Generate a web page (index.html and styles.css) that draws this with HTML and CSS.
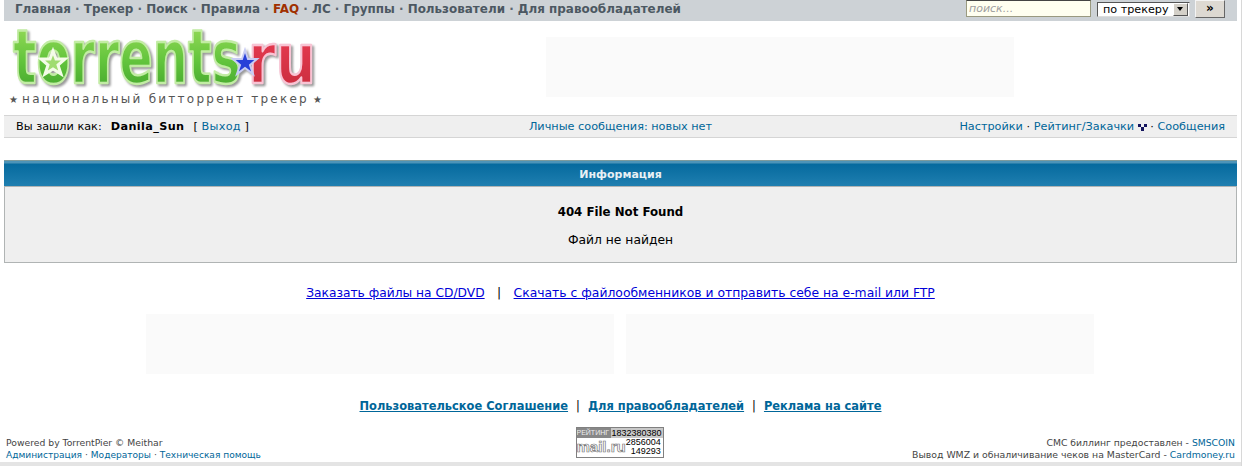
FILE: index.html
```html
<!DOCTYPE html>
<html lang="ru">
<head>
  <meta charset="UTF-8" />
  <title>Torrents.ru - Информация</title>
  <link rel="stylesheet" href="styles.css">
</head>
<body>
  <div class="page">

    <div class="topnav">
      <div class="mainmenu">
        <a href="#">Главная</a> · <a href="#">Трекер</a> · <a href="#">Поиск</a> · <a href="#">Правила</a> · <a href="#" class="faq">FAQ</a> · <a href="#">ЛС</a> · <a href="#">Группы</a> · <a href="#">Пользователи</a> · <a href="#">Для правообладателей</a>
      </div>
      <form class="search">
        <input type="text" class="search-input" placeholder="поиск..." />
        <div class="search-select">по трекеру<span class="select-btn"><i></i></span></div>
        <div class="search-go">»</div>
      </form>
    </div>

    <div class="logo-row">
      <div class="logo">
        <svg class="logo-img" width="320" height="68" viewBox="0 0 320 68">
          <defs>
            <linearGradient id="green" x1="0" y1="0" x2="0" y2="1">
              <stop offset="0" stop-color="#a4e060" />
              <stop offset="0.55" stop-color="#62c43c" />
              <stop offset="1" stop-color="#3c9e2a" />
            </linearGradient>
            <linearGradient id="red" x1="0" y1="0" x2="0" y2="1">
              <stop offset="0" stop-color="#f04058" />
              <stop offset="1" stop-color="#c42a3a" />
            </linearGradient>
          </defs>
          <text x="9" y="60" class="logo-green" textLength="228" lengthAdjust="spacingAndGlyphs">torrents</text>
          <text x="244" y="60" class="logo-red" textLength="68" lengthAdjust="spacingAndGlyphs">ru</text>
          <polygon points="49,28 52,36 61,36 54,42 57,51 49,46 41,51 44,42 37,36 46,36" fill="#a0dc70" stroke="#f4fce8" stroke-width="3" />
          <polygon points="241,27 244,36 253,36 246,42 249,51 241,45 233,51 236,42 229,36 238,36" fill="#2840d8" stroke="#c8ccf4" stroke-width="2" />
        </svg>
        <div class="slogan"><span class="star">★</span> национальный битторрент трекер <span class="star">★</span></div>
      </div>
      <div class="ad ad-top"></div>
    </div>

    <div class="userbar">
      <div class="userbar-left">Вы зашли как: &nbsp;<b>Danila_Sun</b> &nbsp;[ <a href="#">Выход</a> ]</div>
      <div class="userbar-mid"><a href="#">Личные сообщения: новых нет</a></div>
      <div class="userbar-right">
        <a href="#">Настройки</a> · <a href="#">Рейтинг/Закачки</a>
        <svg class="tick" width="9" height="7" viewBox="0 0 9 7"><path d="M0 0h3v3H0zM6 0h3v3H6zM3 3h3v4H3z" fill="#14145e" /></svg>
        · <a href="#">Сообщения</a>
      </div>
    </div>

    <div class="infobox">
      <div class="infobox-head">Информация</div>
      <div class="infobox-body">
        <h4>404 File Not Found</h4>
        <p>Файл не найден</p>
      </div>
    </div>

    <div class="promo">
      <a href="#">Заказать файлы на CD/DVD</a>
      <span class="promo-sep">|</span>
      <a href="#" class="promo-long">Скачать с файлообменников и отправить себе на e-mail или FTP</a>
    </div>

    <div class="ad-row">
      <div class="ad"></div>
      <div class="ad"></div>
    </div>

    <div class="bottomlinks">
      <a href="#">Пользовательское Соглашение</a>
      <span>|</span>
      <a href="#">Для правообладателей</a>
      <span>|</span>
      <a href="#">Реклама на сайте</a>
    </div>

    <div class="footer">
      <div class="footer-left">
        Powered by TorrentPier © Meithar<br />
        <a href="#">Администрация</a> · <a href="#">Модераторы</a> · <a href="#">Техническая помощь</a>
      </div>
      <div class="counter">
        <div class="counter-top"><span class="counter-name">РЕЙТИНГ</span><span class="counter-rate">1832380380</span></div>
        <div class="counter-bottom">
          <span class="counter-logo">mail.ru</span>
          <span class="counter-nums">2856004<br />149293</span>
        </div>
      </div>
      <div class="footer-right">
        СМС биллинг предоставлен - <a href="#">SMSCOIN</a><br />
        <span class="cash">Вывод WMZ и обналичивание чеков на MasterCard - <a href="#">Cardmoney.ru</a></span>
      </div>
    </div>

  </div>
  <div class="pagebottom"></div>
</body>
</html>
```

FILE: styles.css
```css
html, body {
  margin: 0;
  padding: 0;
  background-color: #fff;
}
body {
  color: #000;
  font-family: "DejaVu Sans", Verdana, sans-serif;
  font-size: 11px;
  border-right: 1px solid #d8d8d8;
  height: 466px;
  overflow: hidden;
  box-sizing: border-box;
  position: relative;
}
a {
  color: #006699;
  text-decoration: none;
}
.page {
  margin: 0 4px;
  width: 1233px;
}

.topnav {
  height: 21px;
  background-color: #cdd2d6;
  display: flex;
  justify-content: space-between;
  padding-left: 11px;
  box-sizing: border-box;
}
.mainmenu {
  font-size: 11.95px;
  font-weight: bold;
  line-height: 18px;
  color: #5c6670;
  white-space: nowrap;
}
.mainmenu a {
  color: #4c5862;
}
.mainmenu a.faq {
  color: #a03000;
}
.search {
  margin: 0;
  display: flex;
  align-items: flex-start;
  padding-right: 12px;
}
.search-input {
  width: 125px;
  height: 17px;
  box-sizing: border-box;
  margin: 0 6px 0 0;
  padding: 1px 2px;
  font-family: "DejaVu Sans", sans-serif;
  font-size: 11px;
  font-style: italic;
  background-color: #fffff0;
  border: 1px solid #9a9a80;
  border-top-color: #444;
}
.search-input::placeholder {
  color: #a0a0a0;
}
.search-select {
  width: 93px;
  height: 15px;
  margin-top: 2px;
  box-sizing: border-box;
  background-color: #fff;
  border: 1px solid #555;
  border-color: #555 #ddd #ddd #555;
  font-size: 11.2px;
  line-height: 14px;
  padding-left: 5px;
  position: relative;
  white-space: nowrap;
}
.select-btn {
  position: absolute;
  right: 1px;
  top: 0;
  width: 15px;
  height: 13px;
  background-color: #d4d0c8;
  border: 1px solid;
  border-color: #fff #555 #555 #fff;
  box-sizing: border-box;
}
.select-btn i {
  position: absolute;
  left: 3px;
  top: 3px;
  border: 3px solid transparent;
  border-top: 4px solid #000;
  border-bottom: 0;
}
.search-go {
  width: 30px;
  height: 18px;
  margin-left: 5px;
  box-sizing: border-box;
  background-color: #ddd9d2;
  border: 1px solid;
  border-color: #f4f4f4 #666 #666 #f4f4f4;
  font-size: 12px;
  font-weight: bold;
  line-height: 14px;
  text-align: center;
}

.logo-row {
  height: 94px;
  position: relative;
  display: flex;
}
.logo {
  width: 542px;
  flex: none;
}
.logo-img {
  display: block;
  margin-top: 2px;
  filter: drop-shadow(2px 2px 1px #999);
}
.logo-green {
  font: bold 74px "DejaVu Sans", sans-serif;
  fill: url(#green);
  stroke: #c2eca4;
  stroke-width: 2.5;
  stroke-linejoin: round;
}
.logo-red {
  font: bold 70px "DejaVu Sans", sans-serif;
  fill: url(#red);
  stroke: #f8c4d4;
  stroke-width: 2.5;
  stroke-linejoin: round;
}
.slogan {
  margin: 1px 0 0 7px;
  font-size: 12px;
  line-height: 14px;
  letter-spacing: 2.25px;
  color: #555;
  white-space: nowrap;
}
.star {
  font-size: 10px;
  letter-spacing: 0;
  margin: 0 -2px;
}
.ad {
  width: 468px;
  height: 60px;
  background-color: #fafafa;
}
.ad-top {
  margin-top: 16px;
}

.userbar {
  height: 23px;
  box-sizing: border-box;
  background-color: #efefef;
  border-top: 1px solid #d5d5d5;
  border-bottom: 1px solid #d5d5d5;
  display: grid;
  grid-template-columns: 1fr 1fr 1fr;
  align-items: center;
  padding: 0 12px;
  line-height: 22px;
  font-size: 11.25px;
  white-space: nowrap;
}
.userbar-left b {
  letter-spacing: 0.35px;
  margin: 0 2px 0 2px;
}
.userbar-left a {
  letter-spacing: 0.3px;
}
.userbar-mid {
  text-align: center;
}
.userbar-right {
  text-align: right;
}
.tick {
  vertical-align: -1px;
}

.infobox {
  margin-top: 22px;
  height: 103px;
  box-sizing: border-box;
  border: 1px solid #b0b4b4;
  border-top: 0;
  background-color: #efefef;
}
.infobox-head {
  height: 27px;
  margin: 0 -1px;
  box-sizing: border-box;
  border-top: 1px solid #7d9a9c;
  border-bottom: 1px solid #b0b4b4;
  background: linear-gradient(#4d94b8 0, #4d94b8 2px, #066a9e 3px, #1f7fb0 100%);
  color: #e8f0f4;
  font-size: 11px;
  font-weight: bold;
  line-height: 27px;
  text-align: center;
}
.infobox-body {
  text-align: center;
  font-size: 12.3px;
}
.infobox-body h4 {
  margin: 0;
  padding-top: 18px;
  font-size: 11.8px;
  line-height: 15px;
}
.infobox-body p {
  margin: 13px 0 0;
  line-height: 15px;
}

.promo {
  margin-top: 23px;
  text-align: center;
  font-size: 12.25px;
  line-height: 15px;
}
.promo a {
  color: #0000d8;
  text-decoration: underline;
}
.promo a.promo-long {
  font-size: 12.37px;
}
.promo-sep {
  margin: 0 8.5px;
}

.ad-row {
  margin-top: 13px;
  display: flex;
  justify-content: center;
  gap: 12px;
  padding-right: 1px;
}

.bottomlinks {
  margin-top: 25px;
  text-align: center;
  font-size: 11.45px;
  line-height: 15px;
  font-weight: bold;
}
.bottomlinks a {
  text-decoration: underline;
}
.bottomlinks span {
  font-weight: normal;
  margin: 0 4px;
}

.footer {
  margin-top: 13px;
  display: grid;
  grid-template-columns: 1fr 88px 1fr;
  padding: 0 2px;
  font-size: 9.25px;
  line-height: 12px;
  color: #444;
  white-space: nowrap;
}
.footer-left {
  padding-top: 10px;
}
.footer-left a {
  font-size: 9.05px;
}
.footer-right {
  padding-top: 10px;
  text-align: right;
}
.cash {
  font-size: 9.33px;
}
.counter {
  height: 31px;
  background-color: #808080;
  margin-left: -1px;
  width: 88px;
  padding: 1px;
  box-sizing: border-box;
  font-family: "Liberation Sans", sans-serif;
  color: #000;
  overflow: hidden;
}
.counter-top {
  display: flex;
  justify-content: space-between;
  height: 10px;
  line-height: 10px;
  overflow: hidden;
  background-color: #c8c8c8;
}
.counter-name {
  background-color: #888;
  color: #eee;
  width: 35px;
  font-size: 7px;
  white-space: nowrap;
  overflow: hidden;
}
.counter-rate {
  font-size: 9px;
  padding-right: 1px;
}
.counter-bottom {
  height: 19px;
  background-color: #fff;
  display: flex;
  justify-content: space-between;
}
.counter-logo {
  font-size: 15px;
  line-height: 18px;
  color: #fff;
  font-weight: bold;
  -webkit-text-stroke: 0.7px #777;
  white-space: nowrap;
}
.counter-nums {
  text-align: right;
  padding-right: 2px;
  font-size: 9px;
  line-height: 9px;
}

.pagebottom {
  position: absolute;
  left: 0;
  right: 0;
  bottom: 0;
  height: 4px;
  background-color: #e4e4e4;
}
```
